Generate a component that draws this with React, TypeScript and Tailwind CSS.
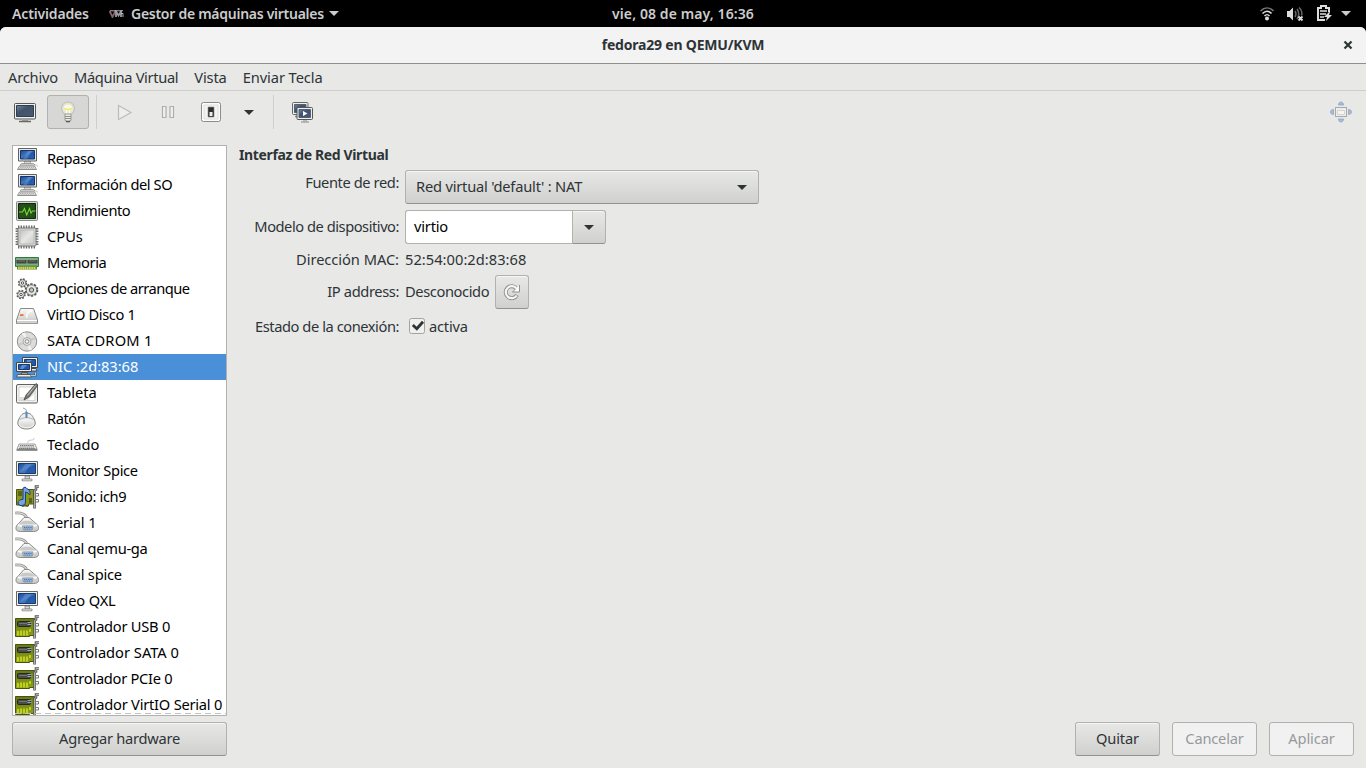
import type { ReactNode } from 'react';

function Svg({ w = 24, h = 24, children }: { w?: number; h?: number; children: ReactNode }) {
  return (
    <svg width={w} height={h} viewBox={`0 0 ${w} ${h}`} fill="none" className="block shrink-0">
      {children}
    </svg>
  );
}

function Defs() {
  return (
    <svg width="0" height="0" className="absolute">
      <defs>
        <linearGradient id="screen" x1="0" y1="0" x2="1" y2="1">
          <stop offset="0" stopColor="#1c4a95" />
          <stop offset=".45" stopColor="#4478c0" />
          <stop offset=".55" stopColor="#2459a8" />
          <stop offset="1" stopColor="#2a62b5" />
        </linearGradient>
        <linearGradient id="slate" x1="0" y1="0" x2="1" y2="1">
          <stop offset="0" stopColor="#75859b" />
          <stop offset=".4" stopColor="#42526b" />
          <stop offset="1" stopColor="#4a5a75" />
        </linearGradient>
        <linearGradient id="metal" x1="0" y1="0" x2="0" y2="1">
          <stop offset="0" stopColor="#fafafa" />
          <stop offset="1" stopColor="#c4c5c2" />
        </linearGradient>
        <linearGradient id="chip" x1="0" y1="0" x2="1" y2="1">
          <stop offset="0" stopColor="#c2c3c1" />
          <stop offset=".5" stopColor="#e6e6e5" />
          <stop offset="1" stopColor="#c8c9c7" />
        </linearGradient>
        <linearGradient id="green" x1="0" y1="0" x2="0" y2="1">
          <stop offset="0" stopColor="#687a14" />
          <stop offset="1" stopColor="#8fa312" />
        </linearGradient>
        <radialGradient id="bulb">
          <stop offset="0" stopColor="#ffffd0" />
          <stop offset=".5" stopColor="#f0f0c8" />
          <stop offset="1" stopColor="#dededb" />
        </radialGradient>
      </defs>
    </svg>
  );
}

function Computer() {
  return (
    <Svg>
      <path d="M9.500 14h6v3h-6z" fill="#d6d7d4" stroke="#8a8c88" strokeWidth=".6" />
      <path d="M3.500 1.500h18v12.500h-18z" fill="#e8e8e6" stroke="#60625e" />
      <path d="M5.500 3.500h14v8.500h-14z" fill="url(#screen)" stroke="#153568" />
      <path d="M13 4h4l-5 8H8z" fill="#7ba7df" opacity=".4" />
      <path d="M6.500 16.500h12l1.500 1.500H5z" fill="#eee" stroke="#8e908c" strokeWidth=".8" />
      <path d="M4.500 19h15l2 3.500h-19z" fill="#f1f1ef" stroke="#777975" strokeWidth=".8" />
      <path d="M5 20.500h14M4 21.700h16" stroke="#8f918d" strokeDasharray="1.5 .7" strokeWidth=".7" />
      <path d="M20 18c2 0 3 .3 2.500 1.500" stroke="#c4c4c2" />
    </Svg>
  );
}

function Monitor() {
  return (
    <Svg>
      <path d="M10 17h4.500v3H10z" fill="#d7d7d4" stroke="#777" strokeWidth=".7" />
      <path d="M7 20h10v1.800H7z" fill="#f2f2f1" stroke="#80827e" strokeWidth=".8" strokeLinejoin="round" />
      <path d="M1.500 2.500h21v14h-21z" fill="#eeeeec" stroke="#666864" />
      <path d="M3.500 4.500h17v10h-17z" fill="url(#screen)" stroke="#173a73" />
      <path d="M10 5h6l-6 9H5z" fill="#7ba7df" opacity=".35" />
    </Svg>
  );
}

function Performance() {
  return (
    <Svg>
      <rect x="1.500" y="2.500" width="21" height="19" rx="1" fill="#d3d5d0" stroke="#888a85" />
      <path d="M3.500 4.500h17v15h-17z" fill="#234d17" stroke="#12290d" />
      <path d="M4 8h16M4 16h16M8 5v14M16 5v14" stroke="#2d6225" strokeWidth=".5" />
      <path d="M4 13h3.500l2-3.500 2.200 6.500 2.800-6.500 1.500 4.500 1.500-2h3" stroke="#78d936" strokeWidth="1.100" />
    </Svg>
  );
}

function Cpu() {
  return (
    <Svg>
      <path d="M1.800 3v18M22.200 3v18M3 1.800h18M3 22.200h18" stroke="#6d6f6b" strokeWidth="2.400" strokeDasharray="1.4 1.2" />
      <rect x="3" y="3" width="18" height="18" rx="1" fill="#d5d6d4" stroke="#777975" />
      <rect x="5" y="5" width="14" height="14" rx="1" fill="url(#chip)" stroke="#b0b1ae" strokeWidth=".7" />
    </Svg>
  );
}

function Memory() {
  return (
    <Svg>
      <path d="M.5 6.500h23v9H.5z" fill="#7fae86" stroke="#35783f" />
      <path d="M1.500 9h10v3.500h-10zM12.500 9h10v3.500h-10z" fill="#43453f" />
      <path d="M3 10h7M14 10h7" stroke="#777" />
      <path d="M2 14.500h20v4H2z" fill="#4b8c3f" />
      <path d="M3 17h18" stroke="#e2cd4e" strokeWidth="2.500" strokeDasharray="1.7 .5" />
    </Svg>
  );
}

function Gears() {
  return (
    <Svg>
      <g fill="#e6e7e4" stroke="#555753">
        <circle cx="7.500" cy="6" r="3.800" strokeWidth="1.800" strokeDasharray="1.6 1.4" />
        <circle cx="7.500" cy="6" r="3.300" strokeWidth=".7" />
        <circle cx="6" cy="17.500" r="3.800" strokeWidth="1.800" strokeDasharray="1.6 1.4" />
        <circle cx="6" cy="17.500" r="3.300" strokeWidth=".7" />
        <circle cx="16.500" cy="13" r="5.800" strokeWidth="2" strokeDasharray="2.200 1.440" />
        <circle cx="16.500" cy="13" r="5.200" strokeWidth=".7" />
      </g>
      <g fill="#fff" stroke="#444642" strokeWidth=".9">
        <circle cx="7.500" cy="6" r="1.200" />
        <circle cx="6" cy="17.500" r="1.200" />
        <circle cx="16.500" cy="13" r="2.200" fill="#c5c6c3" />
      </g>
    </Svg>
  );
}

function Disk() {
  return (
    <Svg>
      <path d="M5.500 5.500h13l4 11.500v3.500h-21V17z" fill="url(#metal)" stroke="#888a85" strokeLinejoin="round" />
      <path d="M2 17.500h20" stroke="#fff" />
      <path d="M2.500 19.500h19" stroke="#d2d3d0" strokeWidth="1.500" />
      <path d="M5 11.200h3.500v1.800H5z" fill="#ef7426" />
      <path d="M12 15c-1-4 1-7 5-7" stroke="#fff" strokeWidth="1.500" opacity=".8" />
    </Svg>
  );
}

function Disc() {
  return (
    <Svg>
      <circle cx="12" cy="12.500" r="9.700" fill="#dcdddb" stroke="#8a8c87" />
      <path d="m12 12.500-5-8 3-1zM12 12.500l5 8-3 1z" fill="#f4f4f4" />
      <path d="m12 12.500 8-5 1 3zM12 12.500l-8 5-1-3z" fill="#c9cac9" />
      <circle cx="12" cy="12.500" r="4" fill="#e5e5e4" stroke="#aaa" />
      <circle cx="12" cy="12.500" r="1.800" fill="#fff" stroke="#888" />
    </Svg>
  );
}

function Network() {
  return (
    <Svg>
      <path d="M15 13.500h6l1 2.500h-6z" fill="#eee" stroke="#464844" />
      <path d="M7.500 2.500h15v10h-15z" fill="#eee" stroke="#464844" />
      <path d="M9.500 4.500h11v6h-11z" fill="#2559aa" stroke="#173b78" />
      <path d="M12 5h5l-4 4h-1z" fill="#5c8fd2" />
      <path d="M1.500 7.500h15v9h-15z" fill="#eee" stroke="#464844" />
      <path d="M3.500 9.500h11v5h-11z" fill="#2559aa" stroke="#173b78" />
      <path d="M7 10h5l-4 4H5z" fill="#5c8fd2" />
      <path d="M6.500 17.500h6v1.500h-6zM2.500 19.500h13l1 2.500h-15z" fill="#eee" stroke="#555753" />
      <path d="M16 20.500h4.500v-3" stroke="#555753" strokeWidth="2" />
      <path d="M16 20.500h4.500v-3" stroke="#ddd" strokeWidth=".8" />
    </Svg>
  );
}

function Tablet() {
  return (
    <Svg>
      <rect x="1.500" y="3.500" width="21" height="18.500" rx="1.500" fill="#f0f0ee" stroke="#60625e" />
      <path d="M4 6h16v13.500H4z" fill="#fff" stroke="#d3d3d0" />
      <path d="M4 16h8l8-9v5l-7 7H4z" fill="#dededc" />
      <path d="M21 2.500 11 14l-2 5 5-3 9-12z" fill="#777975" stroke="#444642" strokeWidth=".8" strokeLinejoin="round" />
      <path d="m20.500 4.500-8 10" stroke="#c5c6c3" strokeWidth="1" />
    </Svg>
  );
}

function Mouse() {
  return (
    <Svg>
      <path d="M8 1c2 1 4 1 3 4" stroke="#8e9092" />
      <path d="M11.500 6c4 0 5.500 2 7.500 6 3.500 6-1 10-7.500 10s-11-4-7.500-10c2-4 3.500-6 7.500-6z" fill="#eeeeed" stroke="#80827e" />
      <path d="M5 12.500c4-2.500 9-2.500 13 0" stroke="#b4b6b2" />
      <path d="M5 14c-2 3 1 6 6.500 6S20 17 18 14c-4-2.500-9-2.500-13 0z" fill="url(#metal)" opacity=".7" />
      <path d="M11.500 5.500v4.500" stroke="#5288c4" strokeWidth="2" strokeLinecap="round" />
    </Svg>
  );
}

function Keyboard() {
  return (
    <Svg>
      <path d="M13 10V8.500c0-2 7-.5 6-3.500" stroke="#c4c5c3" />
      <path d="M4 11h16l2 5H2z" fill="#eee" stroke="#8a8c87" strokeWidth=".8" />
      <path d="M5 12.500h14M4.500 14h15M4 15.500h16" stroke="#6d6f6b" strokeWidth=".9" strokeDasharray="1.4 .5" />
      <path d="M1.500 17h21" stroke="#5a5c58" strokeWidth="1.300" />
    </Svg>
  );
}

function Bracket() {
  return (
    <>
      <path d="M19.500 23.500V5.500l1.500-1V1.500h3" stroke="#555753" strokeWidth="2.600" />
      <path d="M19.500 23V5.500l1.500-1V1.500h3" stroke="#babbb8" strokeWidth=".9" />
      <path d="M21 8.500h2.500v2.500H21M21 14.500h2.500V17H21" stroke="#6a6c68" strokeWidth=".9" />
    </>
  );
}

function Sound() {
  return (
    <Svg>
      <path d="M1.500 4.500h17v14.500h-5v2h-7v-1h-5z" fill="#8c981b" stroke="#495512" />
      <path d="M3 19h2v1h2v1h2v-1h2v1h2" stroke="#52560d" />
      <path d="M14 13h3v5h-3zM3 6h4v5H3z" fill="#5a6519" />
      <Bracket />
      <path d="M8 14.500V3.200l2-1.200c1.500 2 4.500 2 5 5 .2 1.500 0 2-.5 3-.5-1.700-2-2.500-4-3V17c0 4.500-7.500 4.500-7.500 1 0-2.300 2.500-3.800 5-3.500z" fill="#78a4dc" stroke="#193f79" />
    </Svg>
  );
}

function SerialPort() {
  return (
    <Svg>
      <path d="M0 2c7-.5 12 1.500 12 7" stroke="#8f918e" strokeWidth="2.600" />
      <path d="M0 2c7-.5 12 1.500 12 7" stroke="#dcdddb" strokeWidth="1.200" />
      <path d="M9 6.500h5l7.500 6.500c2 1.500 2 3 2 4.500 0 2-2 3-5 3h-13c-3 0-4.500-1-4.500-3 0-2 .5-3.500 2.500-4.800z" fill="url(#metal)" stroke="#8a8c88" strokeLinejoin="round" />
      <path d="M3 14c3 2 16 2 19 0" stroke="#fff" strokeWidth="1.200" />
      <path d="M7 10.500c2-1 8-1 10 0l3 2.500H4.500z" fill="#c9cac8" />
      <path d="M7.500 15h10.500l-.8 4H8.300z" fill="#a6c2e2" stroke="#8b939c" strokeWidth=".8" />
      <path d="M9 16.500h8M9.500 18h7" stroke="#3f73b5" strokeDasharray="1.3 .8" />
    </Svg>
  );
}

function Card() {
  return (
    <Svg>
      <path d="M.5 3.500h19v17h-5v1H.5z" fill="url(#green)" stroke="#46540d" />
      <rect x="2.500" y="6.500" width="13" height="5" rx="1" fill="#4a4d4a" stroke="#252725" />
      <path d="M4 8.500h8" stroke="#737571" />
      <path d="M12.500 7.500h4M12.500 9.500h4" stroke="#8fa9c4" />
      <path d="M3 20.500V16M6 20.500v-5M9 20.500v-5M12 20.500v-5M15 17v-3" stroke="#e0ea2e" strokeWidth="1.300" />
      <Bracket />
    </Svg>
  );
}

const devices: { name: string; icon: () => ReactNode; track: string; selected?: boolean }[] = [
  { name: 'Repaso', icon: Computer, track: 'tracking-[-0.38px]' },
  { name: 'Información del SO', icon: Computer, track: 'tracking-[-0.42px]' },
  { name: 'Rendimiento', icon: Performance, track: 'tracking-[-0.45px]' },
  { name: 'CPUs', icon: Cpu, track: 'tracking-normal' },
  { name: 'Memoria', icon: Memory, track: 'tracking-[-0.4px]' },
  { name: 'Opciones de arranque', icon: Gears, track: 'tracking-[-0.53px]' },
  { name: 'VirtIO Disco 1', icon: Disk, track: 'tracking-[-0.38px]' },
  { name: 'SATA CDROM 1', icon: Disc, track: 'tracking-[0.24px]' },
  { name: 'NIC :2d:83:68', icon: Network, track: 'tracking-[-0.05px]', selected: true },
  { name: 'Tableta', icon: Tablet, track: 'tracking-normal' },
  { name: 'Ratón', icon: Mouse, track: 'tracking-[-0.45px]' },
  { name: 'Teclado', icon: Keyboard, track: 'tracking-normal' },
  { name: 'Monitor Spice', icon: Monitor, track: 'tracking-[-0.34px]' },
  { name: 'Sonido: ich9', icon: Sound, track: 'tracking-[-0.36px]' },
  { name: 'Serial 1', icon: SerialPort, track: 'tracking-[-0.1px]' },
  { name: 'Canal qemu-ga', icon: SerialPort, track: 'tracking-[-0.3px]' },
  { name: 'Canal spice', icon: SerialPort, track: 'tracking-[-0.25px]' },
  { name: 'Vídeo QXL', icon: Monitor, track: 'tracking-[-0.15px]' },
  { name: 'Controlador USB 0', icon: Card, track: 'tracking-[-0.25px]' },
  { name: 'Controlador SATA 0', icon: Card, track: 'tracking-normal' },
  { name: 'Controlador PCIe 0', icon: Card, track: 'tracking-[-0.28px]' },
  { name: 'Controlador VirtIO Serial 0', icon: Card, track: 'tracking-[-0.23px]' },
];

function Arrow({ className = '' }: { className?: string }) {
  return (
    <svg width="10" height="5" viewBox="0 0 10 5" className={`block shrink-0 ${className}`}>
      <path d="M0 0h10L5 5z" fill="currentColor" />
    </svg>
  );
}

const raised =
  'border border-[#b1b2ad] border-b-[#91928e] bg-linear-to-b from-[#e8e8e7] to-[#d0d0ce] shadow-[inset_0_1px_#f6f6f6] rounded-[3px]';
const flat = 'rounded-[3px] border border-[#b1b2ad] bg-[#f1f1f1] text-[#979a9b]';
const label = 'self-center justify-self-end pb-[2px]';

function Toolbar() {
  return (
    <div className="mb-px flex h-[42px] shrink-0 items-center">
      <div className="ml-[13px] w-6">
        <Svg>
          <rect x="1.500" y="3.500" width="21" height="15.500" rx="1" fill="#eee" stroke="#555753" />
          <path d="M3.500 5.500h17v11h-17z" fill="url(#slate)" stroke="#303c50" />
          <path d="M9 19.500h6v1.500H9z" fill="#a5a7a3" />
          <path d="M6 21.500h12" stroke="#666864" strokeWidth="1.300" />
        </Svg>
      </div>
      <div className="ml-[10px] flex h-[34px] w-[42px] items-center justify-center rounded-[3px] border border-[#b1b2ad] bg-[#d7d7d5]">
        <Svg>
          <circle cx="12" cy="8.500" r="6.500" fill="url(#bulb)" stroke="#bdbebb" />
          <path d="M8.500 6.500q3.500-2 7 0l-2 3v4M10.500 13.500v-4l-2-3" stroke="#fff" />
          <path d="M8.500 8.500q3.500 2 7 0" stroke="#e9e05a" strokeWidth="1.200" />
          <path d="M9 14h6v6.500q-3 2.500-6 0z" fill="#ececea" stroke="#888a85" strokeWidth=".8" />
          <path d="M9 16.500h6M9 18.500h6" stroke="#8f918d" />
          <path d="M10 21.500h4" stroke="#555" strokeWidth="1.600" />
        </Svg>
      </div>
      <div className="ml-[7px] h-[34px] w-px bg-[#cfcfcc]" />
      <div className="ml-[15px]">
        <Svg>
          <path d="M6.500 5.500 19 12.500 6.500 19.500z" fill="#eeeeed" stroke="#bcbdba" strokeWidth="1.200" />
        </Svg>
      </div>
      <div className="ml-5">
        <Svg>
          <path d="M6.500 6.500H10v11H6.500zM14 6.500h3.500v11H14z" fill="#f1f1f0" stroke="#aeafac" strokeWidth="1.200" />
        </Svg>
      </div>
      <div className="ml-[19px]">
        <Svg>
          <rect x="2.500" y="2.500" width="19" height="19" rx="2" fill="#fdfdfd" stroke="#8a8c87" />
          <path d="M5 5h14v14H5z" fill="#f3f3f2" stroke="#dedfdc" />
          <path d="M9 7h6v10H9z" fill="#2d2f2d" stroke="#8a8c87" strokeWidth=".6" />
          <path d="M10.500 12h3v4h-3z" fill="#eee" />
        </Svg>
      </div>
      <Arrow className="ml-[21px] text-[#2e3436]" />
      <div className="ml-[19px] h-[34px] w-px bg-[#cfcfcc]" />
      <div className="ml-[17px]">
        <Svg>
          <rect x="1.500" y="2.500" width="15.500" height="12" rx="1" fill="#eee" stroke="#666864" />
          <path d="M3.500 4.500h11.500v8H3.500z" fill="url(#slate)" stroke="#52607a" />
          <path d="M4 16.500h3" stroke="#888a85" strokeWidth="1.500" />
          <rect x="6" y="7.500" width="15.500" height="12" rx="1" fill="#eee" stroke="#555753" />
          <path d="M8 9.500h11.500v8H8z" fill="url(#slate)" stroke="#52607a" />
          <path d="m12 11 4.500 2.500L12 16z" fill="#fff" />
          <path d="M12 20h4v1.500h-4z" fill="#bbb" />
          <path d="M10 22h8" stroke="#888a85" />
        </Svg>
      </div>
      <div className="mr-[13px] ml-auto">
        <Svg>
          <rect x="6.500" y="7.500" width="11" height="9" fill="#eeeeec" stroke="#a7a9a5" />
          <path d="M8.500 10.500h7v4h-7z" fill="#f5f5f4" stroke="#d3d3d0" />
          <g fill="#a9bbd7" stroke="#8fa5c8" strokeWidth=".8">
            <path d="M9.500 5c0-4 5-4 5 0zM9.500 19c0 4 5 4 5 0zM4.500 9.500c-4 0-4 5 0 5zM19.500 9.500c4 0 4 5 0 5z" />
          </g>
        </Svg>
      </div>
    </div>
  );
}

export default function App() {
  return (
    <div className="flex h-screen w-screen flex-col overflow-hidden bg-black font-['Noto_Sans',sans-serif] text-[14.67px] leading-5 text-[#2e3436]">
      <Defs />
      <header className="grid h-[27px] shrink-0 grid-cols-[1fr_auto_1fr] items-center text-[14px] font-semibold text-[#ccc]">
        <div className="flex items-center pl-3">
          <span className="w-[78px] whitespace-nowrap tracking-[-0.15px]">Actividades</span>
          <span className="ml-[19px] flex w-[22px] items-center">
            <svg width="15" height="8" viewBox="0 0 15 8" fill="none">
              <path d="m.5 1 3 6 3-6" stroke="#86616a" strokeWidth="1.800" />
              <path d="M7 7V1.500l2.500 4 2.500-4V7" stroke="#9a9aa2" strokeWidth="1.800" />
              <path d="M1 .8h13M12 3.500h2V7" stroke="#c4c4c8" strokeWidth=".9" />
            </svg>
          </span>
          <span className="w-[194px] whitespace-nowrap tracking-[-0.27px]">Gestor de máquinas virtuales</span>
          <Arrow className="ml-1" />
        </div>
        <span className="tracking-[0.1px]">vie, 08 de may, 16:36</span>
        <div className="flex items-center justify-end pr-[15px]">
          <svg width="16" height="16" viewBox="0 0 16 16" fill="none">
            <path d="M1.500 5c4-4 9-4 13 0" stroke="#777" strokeWidth="1.600" />
            <path d="M3.500 7.500c3-3 6-3 9 0M5.500 10c2-2 3-2 5 0" stroke="#ddd" strokeWidth="1.600" />
            <circle cx="8" cy="12.500" r="2" fill="#ddd" />
          </svg>
          <svg width="18" height="16" viewBox="0 0 18 16" fill="none" className="ml-[11px]">
            <path d="M1 5h2.500L7 1.500v13L3.500 11H1z" fill="#ddd" />
            <path d="M9 5q2 3 0 6M11 3q3.500 5 0 10M13 1.500q4 4 2.500 8" stroke="#666" strokeWidth="1.500" />
            <path d="m12.500 10.500 4 4m0-4-4 4" stroke="#ddd" strokeWidth="1.800" />
          </svg>
          <svg width="16" height="17" viewBox="0 0 16 17" fill="none" className="-mr-px ml-[12px]">
            <path d="M9 15H2V3h3V1h5v2h3v4" stroke="#ddd" strokeWidth="2" />
            <path d="M4 6h7M4 9h6M4 12h4" stroke="#ddd" strokeWidth="1.300" />
            <path d="m13 7-5 5h3l-1 4 6-6h-3l1-3z" fill="#ddd" />
          </svg>
          <Arrow className="ml-[10px]" />
        </div>
      </header>

      <div className="flex min-h-0 flex-1 flex-col overflow-hidden rounded-t-[6px] bg-[#e8e8e7]">
        <div className="grid h-[37px] shrink-0 grid-cols-[1fr_auto_1fr] items-center border-b border-[#8f908b] bg-[#f3f3f3] text-[14px] font-bold">
          <span />
          <span className="tracking-[-0.2px]">fedora29 en QEMU/KVM</span>
          <svg width="10" height="10" viewBox="0 0 10 10" className="mr-[13px] justify-self-end">
            <path d="m1.500 1.500 7 7m0-7-7 7" stroke="#2e3436" strokeWidth="2.200" />
          </svg>
        </div>

        <nav className="flex h-[27px] shrink-0 items-center gap-4 border-b border-[#cdcdca] pb-px pl-2">
          <span className="tracking-[-0.2px]">Archivo</span>
          <span className="tracking-[-0.34px]">Máquina Virtual</span>
          <span className="tracking-[-0.15px]">Vista</span>
          <span className="tracking-[-0.08px]">Enviar Tecla</span>
        </nav>

        <Toolbar />

        <main className="flex min-h-0 flex-1 px-3 pt-[11px] pb-3">
          <aside className="flex w-[215px] flex-col gap-[6px]">
            <div className="relative h-[571px] overflow-hidden border border-[#b1b2ad] bg-white text-black">
              {devices.map(({ name, icon: Icon, track, selected }) => (
                <div
                  key={name}
                  className={`flex h-[26px] items-center pl-[2px] whitespace-nowrap ${selected ? 'bg-[#4a90d9] text-white' : ''}`}
                >
                  <Icon />
                  <span className={`ml-2 pb-[2px] ${track}`}>{name}</span>
                </div>
              ))}
              <svg width="211" height="1" className="absolute bottom-px left-[2px]">
                <path d="M0 .5h211" stroke="#c3c4c2" strokeDasharray="6 4" />
              </svg>
            </div>
            <button className={`h-[34px] pb-[2px] tracking-[-0.28px] ${raised}`}>Agregar hardware</button>
          </aside>

          <section className="ml-3 flex flex-1 flex-col">
            <h1 className="h-5 text-[14px] font-bold tracking-[-0.37px]">Interfaz de Red Virtual</h1>
            <div className="mt-[5px] grid grid-cols-[160px_auto] grid-rows-[34px_34px_19px_34px_24px] gap-x-[6px] gap-y-[6px]">
              <span className="mt-[2px] justify-self-end tracking-[-0.4px]">Fuente de red:</span>
              <div className={`flex h-[34px] w-[354px] items-center justify-between pr-[11px] pl-[10px] ${raised}`}>
                <span className="pb-[2px] tracking-[-0.2px]">Red virtual 'default' : NAT</span>
                <Arrow />
              </div>

              <span className={`tracking-[-0.46px] ${label}`}>Modelo de dispositivo:</span>
              <div className="flex h-[34px] w-[201px]">
                <div className="flex flex-1 items-center rounded-l-[3px] border border-r-0 border-[#b1b2ad] bg-white pb-[2px] pl-2 tracking-[-0.2px] text-black">
                  virtio
                </div>
                <button className={`flex w-[34px] items-center justify-center rounded-l-none ${raised}`}>
                  <Arrow />
                </button>
              </div>

              <span className={`tracking-[-0.05px] ${label}`}>Dirección MAC:</span>
              <span className="self-center pb-[2px] tracking-[0.03px]">52:54:00:2d:83:68</span>

              <span className={`tracking-[-0.38px] ${label}`}>IP address:</span>
              <div className="flex items-center">
                <span className="w-[90px] pb-[2px] tracking-[-0.4px] whitespace-nowrap">Desconocido</span>
                <button className={`flex h-[34px] w-[34px] items-center justify-center ${raised}`}>
                  <svg width="18" height="18" viewBox="0 0 18 18" fill="none">
                    <path d="M13.500 5.500A6 6 0 1 0 14 12" stroke="#8e908b" strokeWidth="4" />
                    <path d="M16.500 2v7H9.500l3-3" fill="#fff" stroke="#8e908b" />
                    <path d="M13.500 5.500A6 6 0 1 0 13.800 12.500" stroke="#f5f5f5" strokeWidth="2.200" />
                  </svg>
                </button>
              </div>

              <span className={`tracking-[-0.44px] ${label}`}>Estado de la conexión:</span>
              <div className="flex items-center pb-[2px] pl-1">
                <svg width="16" height="16" viewBox="0 0 16 16" fill="none">
                  <rect x=".5" y=".5" width="15" height="15" rx="2" fill="#f0f0ef" stroke="#a3a49f" />
                  <path d="m3.800 7 4 3.700 6.200-7" stroke="#2e3436" strokeWidth="2.800" />
                </svg>
                <span className="ml-1 tracking-[-0.2px]">activa</span>
              </div>
            </div>

            <div className="mt-auto flex justify-end gap-3">
              <button className={`h-[34px] w-[85px] pb-[2px] tracking-[-0.15px] ${raised}`}>Quitar</button>
              <button className={`h-[34px] w-[85px] pb-[2px] tracking-[-0.2px] ${flat}`}>Cancelar</button>
              <button className={`h-[34px] w-[85px] pb-[2px] tracking-[-0.1px] ${flat}`}>Aplicar</button>
            </div>
          </section>
        </main>
      </div>
    </div>
  );
}
